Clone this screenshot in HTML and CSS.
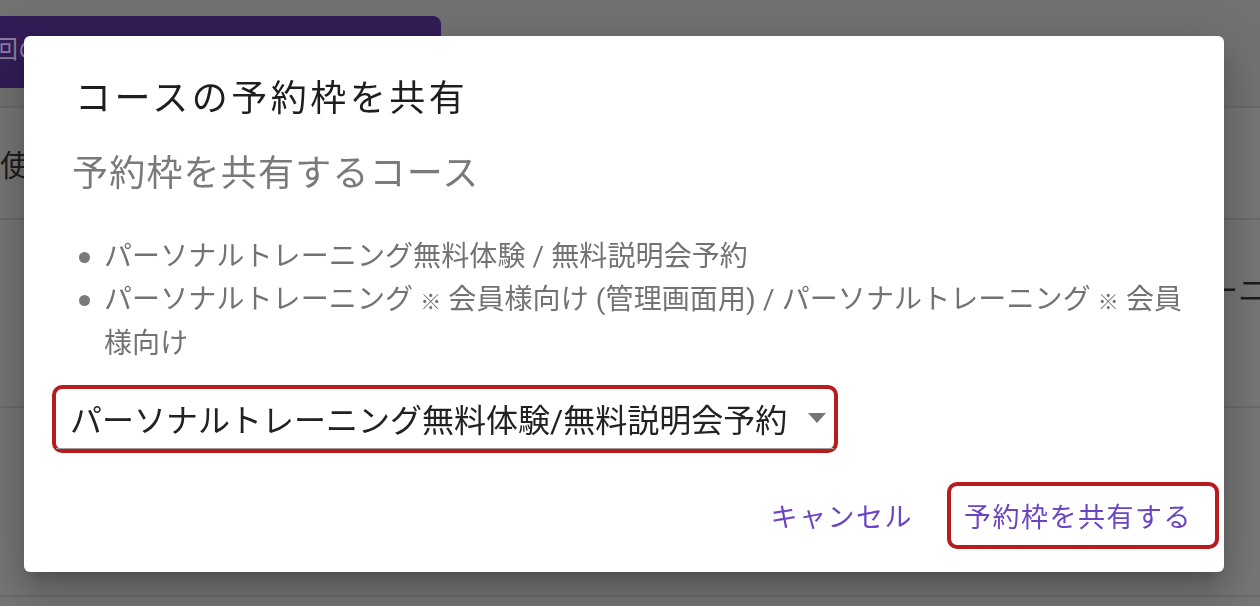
FILE: index.html
```html
<!DOCTYPE html>
<html lang="ja">
<head>
    <meta charset="UTF-8">
    <meta name="viewport" content="width=device-width, initial-scale=1.0">
    <title>コースの予約枠を共有</title>
    <link rel="stylesheet" href="styles.css">
</head>
<body>
    <div class="page">
        <div class="page-header">
            <div class="page-btn">回の予約枠</div>
        </div>
        <div class="page-row row-1"><span class="row-text">使用</span></div>
        <div class="page-row row-2"><span class="row-text right">ーニ</span></div>
        <div class="page-row row-3"></div>
    </div>

    <div class="dialog">
        <div class="dialog-body">
            <h2 class="dialog-title">コースの予約枠を共有</h2>
            <h3 class="dialog-subtitle">予約枠を共有するコース</h3>
            <ul class="course-list">
                <li><span>パーソナルトレーニング無料体験 / 無料説明会予約</span></li>
                <li><span>パーソナルトレーニング <span class="mark">※</span> 会員様向け (管理画面用) / パーソナルトレーニング <span class="mark">※</span> 会員様向け</span></li>
            </ul>
            <div class="select-outline">
                <div class="select-field">
                    <span class="select-value">パーソナルトレーニング無料体験/無料説明会予約</span>
                    <span class="select-arrow"></span>
                </div>
            </div>
        </div>
        <div class="dialog-actions">
            <button type="button" class="btn-text">キャンセル</button>
            <div class="action-outline">
                <button type="button" class="btn-text">予約枠を共有する</button>
            </div>
        </div>
    </div>
</body>
</html>
```

FILE: styles.css
```css
html, body {
    margin: 0;
    height: 100%;
}
body {
    background-color: #767676;
    font-family: Roboto, "Noto Sans CJK JP", sans-serif;
    overflow: hidden;
}

/* page behind the dialog (already dimmed by the overlay) */
.page {
    width: 100%;
}
.page-header {
    height: 108px;
    padding-top: 16px;
    box-sizing: border-box;
    border-bottom: 2px solid #6a6a6a;
    background-color: #727272;
}
.page-btn {
    width: 441px;
    height: 72px;
    background-color: #321c57;
    border-radius: 0 8px 8px 0;
    color: #8a7fa3;
    font-size: 25px;
    line-height: 68px;
    text-indent: -7px;
    white-space: nowrap;
    overflow: hidden;
}
.page-row {
    border-bottom: 2px solid #6a6a6a;
    display: flex;
    align-items: center;
    justify-content: space-between;
    overflow: hidden;
}
.row-1 { height: 110px; }
.row-2 { height: 186px; align-items: flex-start; }
.row-3 { height: 187px; }
.row-text {
    color: #1c1c1c;
    font-size: 30px;
    white-space: nowrap;
}
.row-text.right {
    margin-left: auto;
    margin-top: 46px;
    margin-right: -8px;
}

/* dialog */
.dialog {
    position: fixed;
    top: 36px;
    left: 24px;
    width: 1200px;
    background-color: #fff;
    border-radius: 6px;
    padding: 39px 0 23px;
    box-sizing: border-box;
    box-shadow: 0 11px 15px -7px rgba(0, 0, 0, .2), 0 24px 38px 3px rgba(0, 0, 0, .14), 0 9px 46px 8px rgba(0, 0, 0, .12);
}
.dialog-body {
    padding: 0 36px 0 51px;
}
.dialog-title {
    margin: 0;
    font-size: 36px;
    font-weight: 400;
    line-height: 48px;
    letter-spacing: 3.5px;
    color: #1e1e1e;
}
.dialog-subtitle {
    margin: 27px 0 0 -3px;
    font-size: 36px;
    font-weight: 400;
    line-height: 48px;
    letter-spacing: 1.2px;
    color: #7a7a7a;
}
.course-list {
    list-style: none;
    margin: 38px 0 0;
    padding: 0;
    font-size: 28px;
    line-height: 42.5px;
    letter-spacing: 0.1px;
    color: #737373;
}
.course-list li {
    display: flex;
    align-items: flex-start;
}
.course-list li::before {
    content: "";
    flex: none;
    width: 11px;
    height: 11px;
    margin: 16px 14px 0 4px;
    border-radius: 50%;
    background-color: #7a7a7a;
}
.mark {
    font-size: 0.75em;
}

/* select */
.select-outline {
    margin: 19px 0 0 -23px;
    width: 786px;
    height: 68px;
    box-sizing: border-box;
    border: 4px solid #b71c1f;
    border-radius: 10px;
}
.select-field {
    height: 100%;
    box-sizing: border-box;
    display: flex;
    align-items: center;
    padding: 0 8px 0 14px;
    border-bottom: 1px solid #9e9e9e;
}
.select-value {
    font-size: 32px;
    color: #222;
    white-space: nowrap;
}
.select-arrow {
    margin-left: auto;
    width: 0;
    height: 0;
    border-left: 9px solid transparent;
    border-right: 9px solid transparent;
    border-top: 10px solid #757575;
}

/* actions */
.dialog-actions {
    margin-top: 29px;
    display: flex;
    justify-content: flex-end;
    align-items: center;
    gap: 34px;
    padding-right: 5px;
}
.btn-text {
    background: none;
    border: none;
    padding: 0;
    font-family: inherit;
    font-size: 27px;
    letter-spacing: 1.5px;
    color: #6a44c2;
    cursor: pointer;
}
.action-outline {
    height: 67px;
    box-sizing: border-box;
    border: 4px solid #b71c1f;
    border-radius: 10px;
    padding: 0 23px 0 13px;
    display: flex;
    align-items: center;
}
```
